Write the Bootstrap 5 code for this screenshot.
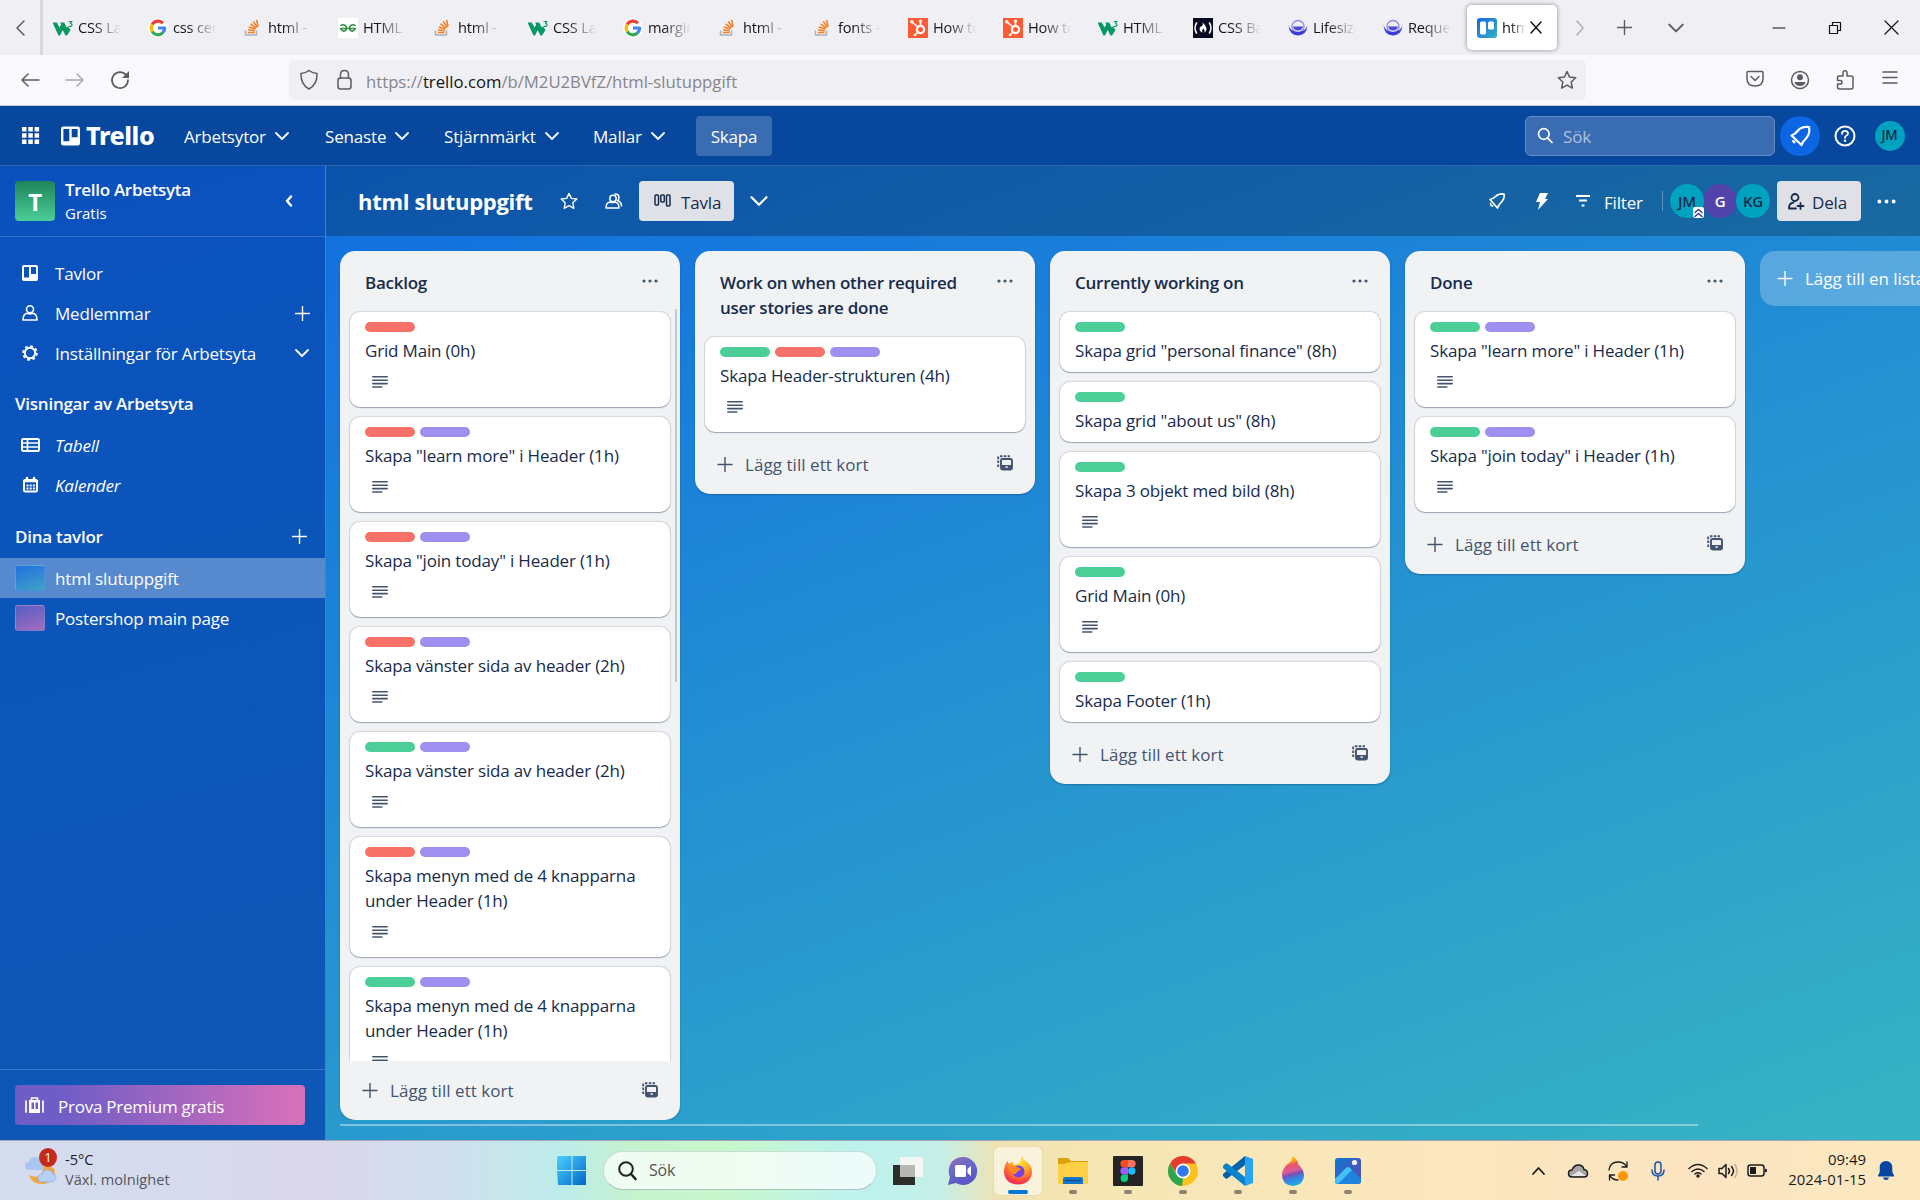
<!DOCTYPE html>
<html lang="sv">
<head>
<meta charset="utf-8">
<title>html slutuppgift | Trello</title>
<link href="https://cdn.jsdelivr.net/npm/bootstrap@5.3.0/dist/css/bootstrap.min.css" rel="stylesheet">
<style>
body{width:1920px;height:1200px;overflow:hidden;font-family:"Open Sans","Noto Sans",sans-serif;font-stretch:89.5%;font-size:17px;line-height:25px;letter-spacing:-.17px;color:#172b4d}
svg{display:block;flex:none;fill:none;stroke:currentColor;stroke-width:1.5;stroke-linecap:round;stroke-linejoin:round;overflow:visible}
svg .f,svg.f{fill:currentColor;stroke:none}
.text-line{white-space:nowrap}
/* browser */
.tabstrip{height:55px;background:#f0eff4;color:#15141a;font-size:14.6px}
.scroll-left{width:43px;border-right:3px solid #dad9df;color:#5b5b66}
.tab-item{width:95px;padding-left:10px;gap:5px}
.tab-item svg,.tab-active svg.fav{width:20px;height:20px;stroke:none}
.tab-label{width:43px;white-space:nowrap;-webkit-mask-image:linear-gradient(90deg,#000 35%,transparent 100%)}
.tab-active{width:90px;height:45px;margin-left:-1px;padding-left:10px;background:#fff;border-radius:5px;box-shadow:0 0 5px rgba(0,0,0,.4);gap:5px}
.tab-active .tab-label{width:24px}
.toolbar{height:51px;background:#f9f9fb;border-bottom:1px solid #c9c9cf;color:#5b5b66}
.cell45{width:45px;display:flex;justify-content:center}
.toolnav{padding-left:7px}
.urlbar{width:1297px;height:40px;background:#f0eff4;border-radius:5px;margin-left:147px}
.url{color:#85858c;font-size:16.7px;padding-top:2px;letter-spacing:0;margin-left:15px}.url b{font-weight:400;color:#15141a}
.tabs-more{width:50px;display:flex;justify-content:center;color:#5b5b66}
.newtab{color:#5b5b66}
.win{width:56.5px;display:flex;justify-content:center;color:#111}
.bookmark{margin-left:auto;margin-right:9px}
/* trello */
.app-area{height:1034px;background:linear-gradient(160deg,#0c66e4,#37b4c3)}
.topnav{height:60px;background:#07479e;border-bottom:1px solid #2f65ae;color:#fff}
.brand{width:97px;font-family:"Noto Sans","Open Sans",sans-serif;font-weight:800;font-size:25px;letter-spacing:-.4px;gap:6px}
.menus{padding-left:26px}
.menu-link{gap:8px}
.menu-link span,.create span,.filt span,.premium span{padding-top:2px}
.m1{width:141px}.m2{width:119px}.m3{width:149px}.m4{width:103px}
.create{width:76px;height:40px;background:#3a6cb2;border-radius:4px}
.right-nav{padding-right:8px}
.searchbox{width:250px;height:40px;background:#3a6cb2;border:1px solid #668dc3;border-radius:6px;padding-left:11px;gap:10px;color:#fff;margin-right:5px}
.searchbox span{color:#adc2de;padding-top:2px}
.circ{border-radius:50%;display:flex;align-items:center;justify-content:center;flex:none}
.bellc{width:40px;height:40px;background:#0c66e4;margin-right:2px}
.ava{background:#00a3bf;color:#172b4d;font-weight:600;font-size:15px;letter-spacing:-.2px}
.av30{width:30px;height:30px;font-size:13.5px}
.side{width:326px;background:linear-gradient(165deg,#0a51be,#0b55ba 40%,#0e57b5);border-right:1px solid #3d84d3;color:#fff}
.side-head{height:71px;border-bottom:1px solid #3671c5;padding:0 28px 0 15px}
.tbox{width:40px;height:40px;border-radius:4px;background:linear-gradient(#1f845a,#4bce97);font-weight:700;font-size:24px}
.wsname{margin:2px 0 0 10px;line-height:22px;letter-spacing:-.3px}
.wsname .plan{font-size:15px;line-height:25px;letter-spacing:0}
.side-row{height:40px;padding-left:15px;gap:10px}
.side-row .icn{width:30px;display:flex;justify-content:center}
.side-title{height:41px;padding-left:15px;font-weight:600;letter-spacing:-.25px}
.views{margin:7px 0 4px;padding-top:6px}
.mine{height:43px;margin-top:10px}
.gap-r{margin-left:auto;margin-right:15px}
.gap-r2{margin-left:auto;margin-right:18px}
.swatch{width:30px;height:26px;border-radius:3px;border:1px solid rgba(255,255,255,.15)}
.sw1{background:linear-gradient(160deg,#2370e2,#3da3c5)}.sw2{background:linear-gradient(160deg,#555fc2,#a36cbd)}
.row-sel{background:#5789cf}
.side-foot{height:71px;border-top:1px solid #3a75c6;padding:15px}
.premium{width:290px;height:40px;border-radius:4px;background:linear-gradient(90deg,#6e5dc6 15%,#d46fba 95%);padding-left:10px;gap:14px;letter-spacing:-.25px}
.boardhead{height:70px;background:rgba(0,0,0,.24);color:#fff;padding-left:32px}
.boardname{width:188px;font-size:22px;font-weight:700;letter-spacing:-.3px}
.viewbtn,.sharebtn{height:40px;border-radius:4px;background:#dfe1e7;color:#172b4d}
.viewbtn{width:95px;padding-left:15px;gap:10px;margin-left:3px}
.sharebtn{width:84px;padding-left:11px;gap:8px;margin-left:8px}
.viewbtn span,.sharebtn span{padding-top:2px}
.filt{gap:14px;width:86px;margin-left:12px}
.av34{width:34px;height:34px;margin-right:-1px}
.sep{width:1px;height:20px;background:rgba(255,255,255,.3);margin-right:7px}
.more{width:45px;display:flex;justify-content:center;margin:0 11px 0 3px}
.lists{padding:15px 0 0 14px;gap:15px;overflow:hidden;width:1594px}
.col-list{width:340px;flex:none;background:#f1f2f4;border-radius:15px;color:#172b4d;box-shadow:0 1px 2px rgba(9,30,66,.3)}
.col-tall{height:869px}
.list-top{padding:19px 22px 16px 25px;font-weight:600;letter-spacing:-.25px}
.list-top span{width:255px}
.list-top svg{margin:3px 0 0 auto;color:#44546f}
.cards{padding:1px 10px 2px;gap:10px}
.col-tall .cards{height:750px;overflow:hidden;flex:none}
.task{background:#fff;border-radius:10px;padding:10px 15px 9px;box-shadow:0 1px 1px rgba(9,30,66,.28),0 0 1px 1px rgba(9,30,66,.12);flex:none}
.task.has-desc{padding-bottom:10px}
.lbls{gap:5px;margin-bottom:6px}
.lbls i{width:50px;height:10px;border-radius:5px}
.g{background:#4bce97}.r{background:#f87168}.p{background:#9f8fef}
.desc{height:34px;padding:12px 0 0 7px;color:#44546f}
.list-foot{height:60px;padding:0 22px 0 20px;color:#44546f;letter-spacing:.05px}
.list-foot span{margin-left:10px}
.list-foot svg:last-child{margin:-2px 0 0 auto}
.addlist{width:300px;height:55px;flex:none;border-radius:15px;background:rgba(255,255,255,.25);color:#fff;padding-left:15px;gap:10px;letter-spacing:-.05px}
.vbar{position:absolute;right:3px;top:58px;width:2px;height:373px;background:#c3cad5}
.hbar{height:2px;width:1358px;margin:4px 0 0 14px;background:rgba(255,255,255,.4)}
/* taskbar */
.taskbar{height:60px;border-top:1px solid #a3a7b5;background:linear-gradient(90deg,#d4dcee 0,#d6dbee 180px,#dbd6ea 310px,#d0dfee 440px,#bdecea 560px,#c6f2cc 640px,#c7f7cd 730px,#bdf2ee 850px,#c4efe8 940px,#f0e2b0 1000px,#f6e7b5 1100px,#fbe7bd 1400px,#fce4c2 1700px,#fce9bf 1920px);color:#1b1b1b}
.weather{width:533px;padding-left:25px;gap:9px;font-size:14.6px;line-height:20px;position:relative;letter-spacing:0}
.weather .text-line{margin-top:-3px}
.wbadge{position:absolute;left:39px;top:7px;width:18px;height:19px;border-radius:50%;background:#c42b1c;color:#fff;font-size:13px;text-align:center;line-height:19px}
.muted{color:#55575c}
.tsearch{width:274px;height:39px;border-radius:20px;background:rgba(255,255,255,.72);border:1px solid rgba(160,190,180,.5);border-bottom-color:#a9c3bd;padding-left:14px;gap:13px;font-size:16px;color:#555}
.tapps{margin-left:3px}
.tapp{width:55px;height:59px;display:flex;align-items:center;justify-content:center;position:relative}
.tapp.on::before{content:"";position:absolute;inset:6px 3px 5px 4px;background:rgba(255,255,255,.55);border-radius:5px;box-shadow:0 0 1px rgba(0,0,0,.3)}
.tapp svg{position:relative;stroke:none}
.tapp.run::after{content:"";position:absolute;left:24px;top:49px;width:8px;height:4px;border-radius:2px;background:#8d836c}
.tapp.on::after{content:"";position:absolute;left:18px;top:49px;width:20px;height:4px;border-radius:2px;background:#0078d4}
.cell40{width:40px;display:flex;justify-content:center}
.batt{margin-right:6px}
.clock{width:93px;text-align:right;font-size:14.9px;line-height:20px;margin-top:-3px;letter-spacing:0}
.member-g{background:#5243aa;color:#fff}
.mic{color:#1755a6}
.notif{color:#0645a0;width:28px;margin-right:10px;display:flex;justify-content:flex-end}
</style>
<script src="https://cdn.jsdelivr.net/npm/bootstrap@5.3.0/dist/js/bootstrap.bundle.min.js"></script>
</head>
<body>
<svg width="0" height="0" class="position-absolute">
<symbol id="w3" viewBox="0 0 20 20"><path d="M-.5 4.500h4.300l2.700 5 1.700-3-1-2h4l2.300 4.800L15 8.500l2.500 3.500-3.500 5.500h-1.500L9.700 12l-2.700 5.500H5.500z" fill="#059862"/><path d="M16 3.500h3l-1.500 1.900c2 0 2 3-.2 2.900h-1.300" fill="none" stroke="#059862" stroke-width="1.200"/></symbol>
<symbol id="goo" viewBox="0 0 20 20"><circle cx="10" cy="10" r="10" fill="#fff"/><g fill="none" stroke-width="3.200" stroke-linecap="butt"><path d="M4.200 6.500A6.700 6.700 0 0 1 15 5.200" stroke="#ea4335"/><path d="M4.200 13.500A7 7 0 0 1 4.200 6.500" stroke="#fbbc05"/><path d="M14.800 14.700A6.700 6.700 0 0 1 4.200 13.500" stroke="#34a853"/><path d="M10 10h6.700a6.700 6.700 0 0 1-2 4.800" stroke="#4285f4"/></g></symbol>
<symbol id="so" viewBox="0 0 20 20"><path d="M2.500 12.500V17h11v-4.500" fill="none" stroke="#a9b1bb" stroke-width="1.500" stroke-linecap="butt"/><path d="M4.800 14.500h6.800M5 11.800l6.800 1M5.700 8.900l6.600 2.200M7.500 5.900l5.600 4.200M10.200 3.400l4.200 5.800M13.600 1.800l1.500 6.800" fill="none" stroke="#f48024" stroke-width="1.600" stroke-linecap="butt"/></symbol>
<symbol id="gfg" viewBox="0 0 20 20"><path d="M0 0h20v20H0z" fill="#fff"/><path d="M2.800 7.300Q6 5.600 8.200 8.500q1 3-1.200 4.300-2.800 1.200-4.500-2.300h15q-1.700 3.500-4.500 2.300-2.200-1.300-1.200-4.300 2.200-2.900 5.400-1.200" fill="none" stroke="#2f8d46" stroke-width="1.500"/></symbol>
<symbol id="hub" viewBox="0 0 20 20"><path d="M0 0h20v20H0z" fill="#ff5c35"/><circle cx="12.500" cy="11.500" r="3.600" fill="none" stroke="#fff" stroke-width="2.200"/><path d="M12.500 8V3.500M10 9L4 4M10 14l-3 3" stroke="#fff" stroke-width="1.600"/><circle cx="3.800" cy="3.800" r="1.700" fill="#fff"/><circle cx="12.500" cy="3" r="1.600" fill="#fff"/><circle cx="7" cy="17" r="1.300" fill="#fff"/></symbol>
<symbol id="fcc" viewBox="0 0 20 20"><path d="M0 0h20v20H0z" fill="#0a0a23"/><path d="M3.500 5q-3 5 0 10M16.500 5q3 5 0 10" fill="none" stroke="#fff" stroke-width="1.500"/><path d="M9.500 4.500q4 3.500 4 6.500 0 2.500-2.500 4 1.500-2.500-.8-4.500-1.700 2-.7 4.500-3-1.500-3-4Q6.500 8.500 9 8q1.500-1.500.5-3.500" fill="#fff"/></symbol>
<symbol id="life" viewBox="0 0 20 20"><circle cx="10" cy="8.500" r="6" fill="none" stroke="#8f8bec" stroke-width="1.300"/><path d="M.5 7q1 10.500 9.500 10.500T19.500 7q-2 7-9.500 7T.5 7z" fill="#3b3bd8"/><path d="M5 8.500h10q-1 4-5 4t-5-4z" fill="#4b49dc"/></symbol>
<linearGradient id="tg" x1="0" y1="0" x2="1" y2="1"><stop offset="0" stop-color="#1268e0"/><stop offset="1" stop-color="#35b0c6"/></linearGradient>
<symbol id="tre" viewBox="0 0 20 20"><rect width="20" height="20" rx="3" fill="url(#tg)"/><rect x="3" y="3.500" width="6" height="13" rx="1.500" fill="#fff"/><rect x="11" y="3.500" width="6" height="8" rx="1.500" fill="#fff"/></symbol>
<symbol id="chev" viewBox="0 0 16 16"><path d="M2 5l6 6 6-6" stroke-width="1.800"/></symbol>
<symbol id="plus" viewBox="0 0 16 16"><path d="M8 .5v15M.5 8h15" stroke-width="1.500"/></symbol>
<symbol id="dots" viewBox="0 0 16 16"><g class="f"><circle cx="2" cy="8" r="1.600"/><circle cx="8" cy="8" r="1.600"/><circle cx="14" cy="8" r="1.600"/></g></symbol>
<symbol id="lines" viewBox="0 0 16 14"><path d="M.8 1.800h14.400M.8 5.200h14.400M.8 8.600h14.400M.8 12h9" stroke-width="1.600"/></symbol>
<symbol id="tmpl" viewBox="0 0 16 16"><path d="M1.200 12V2.500q0-1.300 1.300-1.300H13" stroke-width="1.900" stroke-dasharray="2.600 1.300" stroke-linecap="butt"/><rect x="4" y="4" width="11" height="10.500" rx="1.500" stroke-width="1.900"/><path d="M4 10h11v4.500H4z" class="f"/><path d="M8.500 11.300h2.300v1.500H8.500z" fill="#f1f2f4" stroke="none"/></symbol>
<symbol id="board" viewBox="0 0 16 16"><path class="f" fill-rule="evenodd" d="M2 0h12a2 2 0 0 1 2 2v12a2 2 0 0 1-2 2H2a2 2 0 0 1-2-2V2a2 2 0 0 1 2-2zm0 2v10.500h5V2zm7 0v7h5V2z"/></symbol>
<symbol id="mag" viewBox="0 0 16 16"><circle cx="6.800" cy="6.500" r="5.300" stroke-width="1.700"/><path d="M10.700 10.700L15 15" stroke-width="1.700"/></symbol>
<symbol id="person" viewBox="0 0 16 16"><circle cx="8" cy="4.300" r="3.500" stroke-width="1.600"/><path d="M1 15q0-6.500 4.500-6.800Q8 9.500 10.500 8.200 15 8.500 15 15z" stroke-width="1.600"/></symbol>
<symbol id="star" viewBox="0 0 20 20"><path d="M10 1.500l2.600 5.600 6.100.7-4.500 4.200 1.200 6.100L10 15.100l-5.400 3 1.200-6.100L1.300 7.800l6.100-.7z"/></symbol>
</svg>

<div class="d-flex align-items-center tabstrip">
 <div class="scroll-left h-100 d-flex align-items-center justify-content-center"><svg width="9" height="16"><path d="M8 1L1 8l7 7"/></svg></div>
 <div class="tab-item d-flex align-items-center"><svg><use href="#w3"/></svg><span class="tab-label">CSS La</span></div>
 <div class="tab-item d-flex align-items-center"><svg><use href="#goo"/></svg><span class="tab-label">css cen</span></div>
 <div class="tab-item d-flex align-items-center"><svg><use href="#so"/></svg><span class="tab-label">html -</span></div>
 <div class="tab-item d-flex align-items-center"><svg><use href="#gfg"/></svg><span class="tab-label">HTML</span></div>
 <div class="tab-item d-flex align-items-center"><svg><use href="#so"/></svg><span class="tab-label">html -</span></div>
 <div class="tab-item d-flex align-items-center"><svg><use href="#w3"/></svg><span class="tab-label">CSS La</span></div>
 <div class="tab-item d-flex align-items-center"><svg><use href="#goo"/></svg><span class="tab-label">margin</span></div>
 <div class="tab-item d-flex align-items-center"><svg><use href="#so"/></svg><span class="tab-label">html -</span></div>
 <div class="tab-item d-flex align-items-center"><svg><use href="#so"/></svg><span class="tab-label">fonts -</span></div>
 <div class="tab-item d-flex align-items-center"><svg><use href="#hub"/></svg><span class="tab-label">How to</span></div>
 <div class="tab-item d-flex align-items-center"><svg><use href="#hub"/></svg><span class="tab-label">How to</span></div>
 <div class="tab-item d-flex align-items-center"><svg><use href="#w3"/></svg><span class="tab-label">HTML</span></div>
 <div class="tab-item d-flex align-items-center"><svg><use href="#fcc"/></svg><span class="tab-label">CSS Ba</span></div>
 <div class="tab-item d-flex align-items-center"><svg><use href="#life"/></svg><span class="tab-label">Lifesize</span></div>
 <div class="tab-item d-flex align-items-center"><svg><use href="#life"/></svg><span class="tab-label">Reque</span></div>
 <div class="tab-active d-flex align-items-center"><svg class="fav"><use href="#tre"/></svg><span class="tab-label">htm</span><svg width="10" height="11"><path d="M0 0l10 11M10 0L0 11"/></svg></div>
 <div class="cell45 text-secondary opacity-50"><svg width="8" height="16"><path d="M1 1l6 7-6 7"/></svg></div>
 <div class="cell45 newtab"><svg width="15" height="15"><use href="#plus"/></svg></div>
 <div class="tabs-more ms-1"><svg width="18" height="18"><use href="#chev"/></svg></div>
 <div class="d-flex ms-auto align-items-center">
  <div class="win"><svg width="12" height="12"><path d="M0 6h12" stroke-width="1.200"/></svg></div>
  <div class="win"><svg width="12" height="12"><path d="M.5 3.500h8v8h-8zM3.500 3.500v-3h8v8h-3" stroke-width="1.200"/></svg></div>
  <div class="win"><svg width="13" height="13"><path d="M0 0l13 13M13 0L0 13" stroke-width="1.200"/></svg></div>
 </div>
</div>
<div class="d-flex align-items-center toolbar">
 <div class="d-flex align-items-center toolnav">
  <div class="cell45"><svg width="18" height="14"><path d="M18 7H1M7 1L1 7l6 6"/></svg></div>
  <div class="cell45 opacity-50"><svg width="18" height="14"><path d="M0 7h17M11 1l6 6-6 6"/></svg></div>
  <div class="cell45"><svg width="18" height="18"><path d="M15.500 4.500A8 8 0 1 0 17 9" stroke-width="1.700"/><path class="f" d="M18 0v7h-7z"/></svg></div>
 </div>
 <div class="urlbar d-flex align-items-center">
  <svg class="ms-2 me-3" width="21" height="20"><path d="M12 .5q4 3 8 3 .5 11-8 15.500Q3.500 14.500 4 3.500q4 0 8-3z"/></svg>
  <svg width="17" height="20"><rect x="4" y="8" width="13" height="11" rx="2.500"/><path d="M6.500 8V4.500q0-4 4-4t4 4V8"/></svg>
  <span class="url text-line">https://<b>trello.com</b>/b/M2U2BVfZ/html-slutuppgift</span>
  <svg class="bookmark" width="20" height="20"><use href="#star"/></svg>
 </div>
 <div class="d-flex ms-auto pe-2">
  <div class="cell45"><svg width="18" height="18"><path d="M2 1.500h14q1 0 1 1v6q0 7.500-8 7.500T1 8.500v-6q0-1 1-1zM5 6.500l4 4 4-4"/></svg></div>
  <div class="cell45"><svg width="19" height="19"><circle cx="10" cy="10" r="8.500"/><circle class="f" cx="10" cy="7.300" r="3"/><path class="f" d="M4.500 12h11q-1 4-5.500 4t-5.500-4z"/></svg></div>
  <div class="cell45"><svg width="18" height="20"><path d="M7 6V3q0-2.200 2-2.200T11 3v3h4q2 0 2 2v9q0 2-2 2H3.500q-2 0-2-2v-3H4q2 0 2-1.800T4 10.500H1.500V7.500Q1.500 6 3 6z"/></svg></div>
  <div class="cell45"><svg width="16" height="16"><path d="M1 2h14M1 7.500h14M1 13h14"/></svg></div>
 </div>
</div>

<div class="app-area d-flex flex-column">
 <div class="topnav d-flex align-items-center flex-shrink-0">
  <div class="cell45 ms-2 me-2"><svg class="f" width="17" height="17"><path d="M0 0h4.500v4.500H0zM6.300 0h4.500v4.500H6.300zM12.600 0h4.500v4.500h-4.500zM0 6.300h4.500v4.500H0zM6.300 6.300h4.500v4.500H6.300zM12.600 6.300h4.500v4.500h-4.500zM0 12.600h4.500v4.500H0zM6.300 12.600h4.500v4.500H6.300zM12.600 12.600h4.500v4.500h-4.500z"/></svg></div>
  <div class="brand d-flex align-items-center"><svg width="19" height="20"><use href="#board"/></svg>Trello</div>
  <div class="menus d-flex align-items-center">
   <div class="m1 menu-link d-flex align-items-center"><span class="text-line">Arbetsytor</span><svg width="16" height="16"><use href="#chev"/></svg></div>
   <div class="m2 menu-link d-flex align-items-center"><span class="text-line">Senaste</span><svg width="16" height="16"><use href="#chev"/></svg></div>
   <div class="m3 menu-link d-flex align-items-center"><span class="text-line">Stjärnmärkt</span><svg width="16" height="16"><use href="#chev"/></svg></div>
   <div class="m4 menu-link d-flex align-items-center"><span class="text-line">Mallar</span><svg width="16" height="16"><use href="#chev"/></svg></div>
  </div>
  <div class="create d-flex align-items-center justify-content-center"><span>Skapa</span></div>
  <div class="d-flex align-items-center ms-auto right-nav">
   <div class="searchbox d-flex align-items-center"><svg width="16" height="17"><use href="#mag"/></svg><span>Sök</span></div>
   <div class="circ bellc"><svg width="20" height="20"><path d="M1.500 9.500L11.500 19q1.500-4 4.500-6.500 4.500-5 3-11.500-7-1-11 3.500-2.500 3.500-6.500 5z" stroke-width="2.200"/><path d="M2 14q0 3.500 3.500 3.500l-.5-3z" class="f"/></svg></div>
   <div class="cell45"><svg width="22" height="22"><circle cx="11" cy="11" r="9.500" stroke-width="2"/><path d="M8 8.800q0-3 3-3t3 2.700q0 1.500-1.800 2.300-1.200.6-1.200 2" stroke-width="1.800"/><circle class="f" cx="11" cy="15.800" r="1.200"/></svg></div>
   <div class="cell45"><div class="circ ava av30">JM</div></div>
  </div>
 </div>
 <div class="d-flex flex-grow-1">
  <div class="side d-flex flex-column flex-shrink-0">
   <div class="side-head d-flex align-items-center flex-shrink-0">
    <div class="tbox d-flex align-items-center justify-content-center">T</div>
    <div class="wsname"><div class="fw-semibold text-line">Trello Arbetsyta</div><div class="plan">Gratis</div></div>
    <svg class="ms-auto me-1" width="8" height="12"><path d="M6 1.500L2 6l4 4.500" stroke-width="2.500"/></svg>
   </div>
   <div class="mt-3">
    <div class="side-row d-flex align-items-center"><div class="icn"><svg width="16" height="16"><use href="#board"/></svg></div>Tavlor</div>
    <div class="side-row d-flex align-items-center"><div class="icn"><svg width="16" height="16"><use href="#person"/></svg></div>Medlemmar<svg class="gap-r" width="15" height="15"><use href="#plus"/></svg></div>
    <div class="side-row d-flex align-items-center text-line"><div class="icn"><svg width="16" height="16"><circle cx="8" cy="8" r="5.200" stroke-width="2"/><circle cx="8" cy="8" r="6.900" stroke-width="1.800" stroke-dasharray="2.800 2.620" stroke-linecap="butt"/></svg></div>Inställningar för Arbetsyta<svg class="gap-r" width="16" height="16"><use href="#chev"/></svg></div>
   </div>
   <div class="side-title views d-flex align-items-center">Visningar av Arbetsyta</div>
   <div class="side-row d-flex align-items-center fst-italic"><div class="icn"><svg width="19" height="14"><rect x="1" y="1" width="17" height="12" rx="1.500" stroke-width="2"/><path d="M1 5h17M1 9h17M6.500 1v12" stroke-width="1.700"/></svg></div>Tabell</div>
   <div class="side-row d-flex align-items-center fst-italic"><div class="icn"><svg width="15" height="16"><rect x="1" y="3" width="13" height="11.500" rx="1.500" stroke-width="2"/><path d="M1 4h13M4 1v2M11 1v2" stroke-width="2.400"/><path d="M3.500 8.500h8.500M3.500 11.500h8.500" stroke-dasharray="2 1.200" stroke-width="2" stroke-linecap="butt"/></svg></div>Kalender</div>
   <div class="side-title mine d-flex align-items-center">Dina tavlor<svg class="gap-r2" width="15" height="15"><use href="#plus"/></svg></div>
   <div class="side-row row-sel d-flex align-items-center"><div class="swatch sw1"></div>html slutuppgift</div>
   <div class="side-row d-flex align-items-center"><div class="swatch sw2"></div>Postershop main page</div>
   <div class="side-foot mt-auto"><div class="premium d-flex align-items-center"><svg width="19" height="16"><path class="f" fill-rule="evenodd" d="M4 3h11v13H4zm2.500 2.500V12H9V5.500zm4 0V12H13V5.500z"/><path d="M1 4v11M18 4v11M6.500 3V1h6v2" stroke-width="1.700"/></svg><span>Prova Premium gratis</span></div></div>
  </div>
  <div class="d-flex flex-column">
   <div class="boardhead d-flex align-items-center">
    <div class="boardname text-line">html slutuppgift</div>
    <div class="cell45"><svg width="18" height="18" viewBox="0 0 20 20"><use href="#star"/></svg></div>
    <div class="cell45"><svg width="17" height="17"><circle cx="8" cy="5.500" r="3.200"/><path d="M1 15q0-5.500 4-6 2.500 1 5 0 4 .5 4 6zM10 1q4 0 4 3.500 0 2-1.500 3 4 1.500 4 5.500"/></svg></div>
    <div class="viewbtn d-flex align-items-center"><svg width="17" height="13"><rect x="1" y="0" width="3.500" height="10" rx="1"/><rect x="6.800" y="0" width="3.500" height="7" rx="1"/><rect x="12.500" y="0" width="3.500" height="11" rx="1"/></svg><span>Tavla</span></div>
    <div class="cell45 ps-1"><svg width="20" height="20"><use href="#chev"/></svg></div>
    <div class="d-flex align-items-center ms-auto">
     <div class="cell45"><svg width="16" height="16"><path d="M1 6.500L8.500 15q1-3 3.500-5.500Q16 5.500 15 1 9.500.5 6.500 3.500 4 6 1 6.500zM1.500 10.500q0 2 2 2.500" stroke-width="1.700"/></svg></div>
     <div class="cell45"><svg class="f" width="12" height="17"><path d="M4 0h8L9 6h3L2 17l2-8H0z"/></svg></div>
     <div class="filt d-flex align-items-center"><svg width="14" height="12"><path d="M0 1h14M3 5.500h8M5.500 10.500h3" stroke-width="1.800" stroke-linecap="butt"/></svg><span>Filter</span></div>
     <div class="sep"></div>
     <div class="circ ava av34 position-relative">JM<svg class="position-absolute end-0 bottom-0" width="11" height="11"><rect width="11" height="11" rx="2" fill="#fff" stroke="none"/><path d="M2 5.500l3.500-3L9 5.500M2 9.500l3.500-3L9 9.500" stroke="#403294"/></svg></div>
     <div class="circ ava av34 member-g">G</div>
     <div class="circ ava av34">KG</div>
     <div class="sharebtn d-flex align-items-center"><svg width="16" height="17"><circle cx="7" cy="4.500" r="3.500" stroke-width="1.800"/><path d="M8 15.500H1q0-5.500 4.500-6M12.500 10v6M9.500 13h6" stroke-width="1.800"/></svg><span>Dela</span></div>
     <div class="more"><svg width="19" height="19"><use href="#dots"/></svg></div>
    </div>
   </div>
   <div class="lists d-flex align-items-start">
    <div class="col-list col-tall d-flex flex-column position-relative">
     <div class="list-top d-flex"><span>Backlog</span><svg width="16" height="16"><use href="#dots"/></svg></div>
     <div class="vbar"></div>
     <div class="cards d-flex flex-column">
      <div class="task has-desc"><div class="lbls d-flex"><i class="r"></i></div>Grid Main (0h)<div class="desc"><svg width="16" height="14"><use href="#lines"/></svg></div></div>
      <div class="task has-desc"><div class="lbls d-flex"><i class="r"></i><i class="p"></i></div>Skapa "learn more" i Header (1h)<div class="desc"><svg width="16" height="14"><use href="#lines"/></svg></div></div>
      <div class="task has-desc"><div class="lbls d-flex"><i class="r"></i><i class="p"></i></div>Skapa "join today" i Header (1h)<div class="desc"><svg width="16" height="14"><use href="#lines"/></svg></div></div>
      <div class="task has-desc"><div class="lbls d-flex"><i class="r"></i><i class="p"></i></div>Skapa vänster sida av header (2h)<div class="desc"><svg width="16" height="14"><use href="#lines"/></svg></div></div>
      <div class="task has-desc"><div class="lbls d-flex"><i class="g"></i><i class="p"></i></div>Skapa vänster sida av header (2h)<div class="desc"><svg width="16" height="14"><use href="#lines"/></svg></div></div>
      <div class="task has-desc"><div class="lbls d-flex"><i class="r"></i><i class="p"></i></div>Skapa menyn med de 4 knapparna under Header (1h)<div class="desc"><svg width="16" height="14"><use href="#lines"/></svg></div></div>
      <div class="task has-desc"><div class="lbls d-flex"><i class="g"></i><i class="p"></i></div>Skapa menyn med de 4 knapparna under Header (1h)<div class="desc"><svg width="16" height="14"><use href="#lines"/></svg></div></div>
     </div>
     <div class="list-foot d-flex align-items-center"><svg width="20" height="15"><use href="#plus"/></svg><span>Lägg till ett kort</span><svg width="16" height="16"><use href="#tmpl"/></svg></div>
    </div>
    <div class="col-list">
     <div class="list-top d-flex"><span>Work on when other required user stories are done</span><svg width="16" height="16"><use href="#dots"/></svg></div>
     <div class="cards d-flex flex-column">
      <div class="task has-desc"><div class="lbls d-flex"><i class="g"></i><i class="r"></i><i class="p"></i></div>Skapa Header-strukturen (4h)<div class="desc"><svg width="16" height="14"><use href="#lines"/></svg></div></div>
     </div>
     <div class="list-foot d-flex align-items-center"><svg width="20" height="15"><use href="#plus"/></svg><span>Lägg till ett kort</span><svg width="16" height="16"><use href="#tmpl"/></svg></div>
    </div>
    <div class="col-list">
     <div class="list-top d-flex"><span>Currently working on</span><svg width="16" height="16"><use href="#dots"/></svg></div>
     <div class="cards d-flex flex-column">
      <div class="task"><div class="lbls d-flex"><i class="g"></i></div>Skapa grid "personal finance" (8h)</div>
      <div class="task"><div class="lbls d-flex"><i class="g"></i></div>Skapa grid "about us" (8h)</div>
      <div class="task has-desc"><div class="lbls d-flex"><i class="g"></i></div>Skapa 3 objekt med bild (8h)<div class="desc"><svg width="16" height="14"><use href="#lines"/></svg></div></div>
      <div class="task has-desc"><div class="lbls d-flex"><i class="g"></i></div>Grid Main (0h)<div class="desc"><svg width="16" height="14"><use href="#lines"/></svg></div></div>
      <div class="task"><div class="lbls d-flex"><i class="g"></i></div>Skapa Footer (1h)</div>
     </div>
     <div class="list-foot d-flex align-items-center"><svg width="20" height="15"><use href="#plus"/></svg><span>Lägg till ett kort</span><svg width="16" height="16"><use href="#tmpl"/></svg></div>
    </div>
    <div class="col-list">
     <div class="list-top d-flex"><span>Done</span><svg width="16" height="16"><use href="#dots"/></svg></div>
     <div class="cards d-flex flex-column">
      <div class="task has-desc"><div class="lbls d-flex"><i class="g"></i><i class="p"></i></div>Skapa "learn more" i Header (1h)<div class="desc"><svg width="16" height="14"><use href="#lines"/></svg></div></div>
      <div class="task has-desc"><div class="lbls d-flex"><i class="g"></i><i class="p"></i></div>Skapa "join today" i Header (1h)<div class="desc"><svg width="16" height="14"><use href="#lines"/></svg></div></div>
     </div>
     <div class="list-foot d-flex align-items-center"><svg width="20" height="15"><use href="#plus"/></svg><span>Lägg till ett kort</span><svg width="16" height="16"><use href="#tmpl"/></svg></div>
    </div>
    <div class="addlist d-flex align-items-center text-line"><svg width="20" height="15"><use href="#plus"/></svg>Lägg till en lista</div>
   </div>
   <div class="hbar"></div>
  </div>
 </div>
</div>

<div class="taskbar d-flex align-items-center">
 <div class="weather d-flex align-items-center h-100">
  <svg width="31" height="31" stroke="none"><path d="M18 10q10 0 12 6-2 13-13 13-10 0-13-9 8 4 12-1 3-4 2-9z" fill="#f5a53a" stroke="none"/><path d="M4 15q-4 0-4-4t4-4q1-5 6-5t6 6q3 0 3 4 0 3-3 3z" fill="#a9c6f0" stroke="none"/><path d="M16 27q-3 0-3-4t4-4q2-5 6-4 4 0 5 4 4 1 3 4t-4 4z" fill="#b6d0f7" stroke="#86a9e0" stroke-width=".6"/></svg>
  <div class="wbadge">1</div>
  <div class="text-line"><div>-5°C</div><div class="muted">Växl. molnighet</div></div>
 </div>
 <div class="d-flex align-items-center">
  <div class="d-flex me-3 ms-4"><svg width="30" height="29"><linearGradient id="wg" x1="0" y1="0" x2="1" y2="1"><stop offset="0" stop-color="#4cd0ff"/><stop offset="1" stop-color="#0067c8"/></linearGradient><path d="M1 0h13.500v14H0V1zM15.500 0H29v14H15.500zM0 15h14.500v14H1zM15.500 15H29v14H15.500z" fill="url(#wg)" stroke="none"/></svg></div>
  <div class="tsearch d-flex align-items-center"><svg width="18" height="19" color="#222"><circle cx="8" cy="8" r="6.800" stroke-width="2"/><path d="M13 13l4.500 5" stroke-width="2.600"/></svg><span>Sök</span></div>
 </div>
 <div class="d-flex tapps">
  <div class="tapp"><svg width="30" height="28"><path d="M0 8h22v20H0z" fill="#2e2d2b"/><path d="M7 0h23v20H7z" fill="#f4f5f5"/><path d="M7 8h15v12H7z" fill="#b7b7b5"/></svg></div>
  <div class="tapp"><svg width="29" height="28"><linearGradient id="cg" x1="0" y1="0" x2=".5" y2="1"><stop offset="0" stop-color="#9a6fa8"/><stop offset=".5" stop-color="#6668cc"/><stop offset="1" stop-color="#5a56c4"/></linearGradient><path d="M15 0a14 14 0 1 1-7 26l-8 2 2-8A14 14 0 0 1 15 0z" fill="url(#cg)"/><rect x="7" y="8" width="11" height="12" rx="1.500" fill="#fff"/><path d="M19.500 12l3.500-3v10l-3.500-3z" fill="#fff"/></svg></div>
  <div class="tapp on"><svg width="28" height="29"><radialGradient id="ff" cx=".6" cy=".2" r=".9"><stop offset="0" stop-color="#ffe83b"/><stop offset=".45" stop-color="#ff9a20"/><stop offset=".8" stop-color="#fc3a46"/><stop offset="1" stop-color="#e31587"/></radialGradient><path d="M18 0q1 4 5 6 5 4 5 10-1 12-14 12.500Q1 28 0 16 0 10 3.500 5L5 8l3-2 2 3q5-1 7-5z" fill="url(#ff)"/><circle cx="14.500" cy="15.500" r="6" fill="#7542e5"/><path d="M5 11q5-3 10 1 3 0 1 2-3 1-4 4-6 1-7-7z" fill="#ff8a25"/></svg></div>
  <div class="tapp run"><svg width="30" height="26"><path d="M0 0h10l3 3h17v10H0z" fill="#dba10b"/><path d="M0 6q8 0 12-2h18v22H0z" fill="#ffcf45"/><path d="M5 26v-5q0-2 2-2h16q2 0 2 2v5z" fill="#1076c9"/><path d="M8 22.500h14" stroke="#0a4f94"/></svg></div>
  <div class="tapp run"><svg width="30" height="30"><rect width="30" height="30" rx="1" fill="#242424"/><path d="M15 4h-4a3.500 3.500 0 0 0 0 7.300h4z" fill="#f24e1e"/><path d="M15 4h4a3.600 3.600 0 0 1 0 7.300h-4z" fill="#ff7262"/><path d="M15 11.300h-4a3.500 3.500 0 0 0 0 7.300h4z" fill="#a259ff"/><circle cx="18.800" cy="15" r="3.700" fill="#1abcfe"/><path d="M15 18.600h-4a3.700 3.700 0 1 0 4 3.700z" fill="#0acf83"/></svg></div>
  <div class="tapp run"><svg width="30" height="30"><circle cx="15" cy="15" r="15" fill="#fcc31e"/><path d="M2 7.500A15 15 0 0 1 28 7.500H15L9 18z" fill="#e33b2e"/><path d="M2 7.500L8.500 18.700 15 22.500 14 30A15 15 0 0 1 2 7.500z" fill="#2da44e"/><circle cx="15" cy="15" r="7.400" fill="#fff"/><circle cx="15" cy="15" r="5.800" fill="#2f78ee"/></svg></div>
  <div class="tapp run"><svg width="30" height="30"><path d="M22 0v9L5 22 3 23l-3-3v-2z" fill="#0063ac"/><path d="M22 30v-9L5 8 3 7l-3 3v2z" fill="#0884cf"/><path d="M22 0l8 3v24l-8 3z" fill="#27a4f2"/></svg></div>
  <div class="tapp run"><svg width="24" height="30"><linearGradient id="dg" x1=".4" y1="0" x2=".6" y2="1"><stop offset="0" stop-color="#ffc400"/><stop offset=".18" stop-color="#fba01e"/><stop offset=".28" stop-color="#ef5668"/><stop offset=".5" stop-color="#d65aa0"/><stop offset=".6" stop-color="#7a4fb0"/><stop offset=".72" stop-color="#3f7ae0"/><stop offset="1" stop-color="#15b6ea"/></linearGradient><path d="M11 0q6 3 6 8 6 6 6 11 0 10-11 11Q1 29 1 19 1 12 9 6q3-3 2-6z" fill="url(#dg)"/></svg></div>
  <div class="tapp run"><svg width="26" height="26"><linearGradient id="pg" x1="0" y1="0" x2="1" y2=".7"><stop offset="0" stop-color="#0d77d5"/><stop offset="1" stop-color="#5550b5"/></linearGradient><rect width="26" height="26" rx="3" fill="url(#pg)"/><path d="M0 21l11-11q2-2 4 0l11 11v2q0 3-3 3H3q-3 0-3-3z" fill="#1d83dc"/><path d="M0 21l11-11q2-2 4 0l2 2L3 26q-3 0-3-3z" fill="#41c1f5"/><circle cx="19.500" cy="4.500" r="2.600" fill="#f5eef5"/></svg></div>
 </div>
 <div class="d-flex align-items-center ms-auto pe-3">
  <div class="cell40"><svg width="13" height="8"><path d="M1 7l5.500-6L12 7" stroke-width="1.800"/></svg></div>
  <div class="cell40"><svg width="20" height="14"><path d="M4 13q-3.500 0-3.500-3.500T4 6q2-5 6.500-5T16 5.500q3.500.5 3.500 4T16 13z" fill="#a6a6a6"/><path d="M3 12l8-5 7 5z" fill="#e6e6e6" stroke="none"/></svg></div>
  <div class="cell40"><svg width="20" height="20"><path d="M1 9q1-8 9-8 6 0 8.500 4.500M19 1v5h-5M10 19q-5 0-8-4M1.500 19v-5h5" stroke-width="1.300"/><circle cx="15" cy="15" r="5" fill="#ff9800" stroke="none"/></svg></div>
  <div class="cell40 mic"><svg width="14" height="20"><rect x="4" y="1" width="6" height="12" rx="3"/><path d="M1 9q0 6 6 6t6-6M7 15v4"/></svg></div>
  <div class="cell40"><svg width="20" height="15"><path d="M1 5.500q9-8 18 0M4 8.500q6-5 12 0M7 11q3-2.500 6 0"/><circle class="f" cx="10" cy="13" r="1.700"/></svg></div>
  <div class="d-flex me-2"><svg width="21" height="16"><path d="M1 5.500v5h3l4 4v-13l-4 4zM10.500 5.500q2 2.500 0 5M13.500 3.500q4 4.500 0 9"/><path d="M17 1.500q4 6.500 0 13" opacity=".25"/></svg></div>
  <div class="d-flex batt"><svg width="20" height="13"><rect x="1" y="1" width="16" height="11" rx="2.500"/><path class="f" d="M3 3h6v7H3zM18 4.500l2 1v2l-2 1z"/></svg></div>
  <div class="clock text-line"><div>09:49</div><div>2024-01-15</div></div>
  <div class="notif"><svg class="f" width="16" height="19"><path d="M8 0q6 0 6.300 6.500V11L16 14.500v1H0v-1L1.700 11V6.500Q2 0 8 0zM5 16.500h6Q10.500 19 8 19t-3-2.500z"/></svg></div>
 </div>
</div>
</body>
</html>
